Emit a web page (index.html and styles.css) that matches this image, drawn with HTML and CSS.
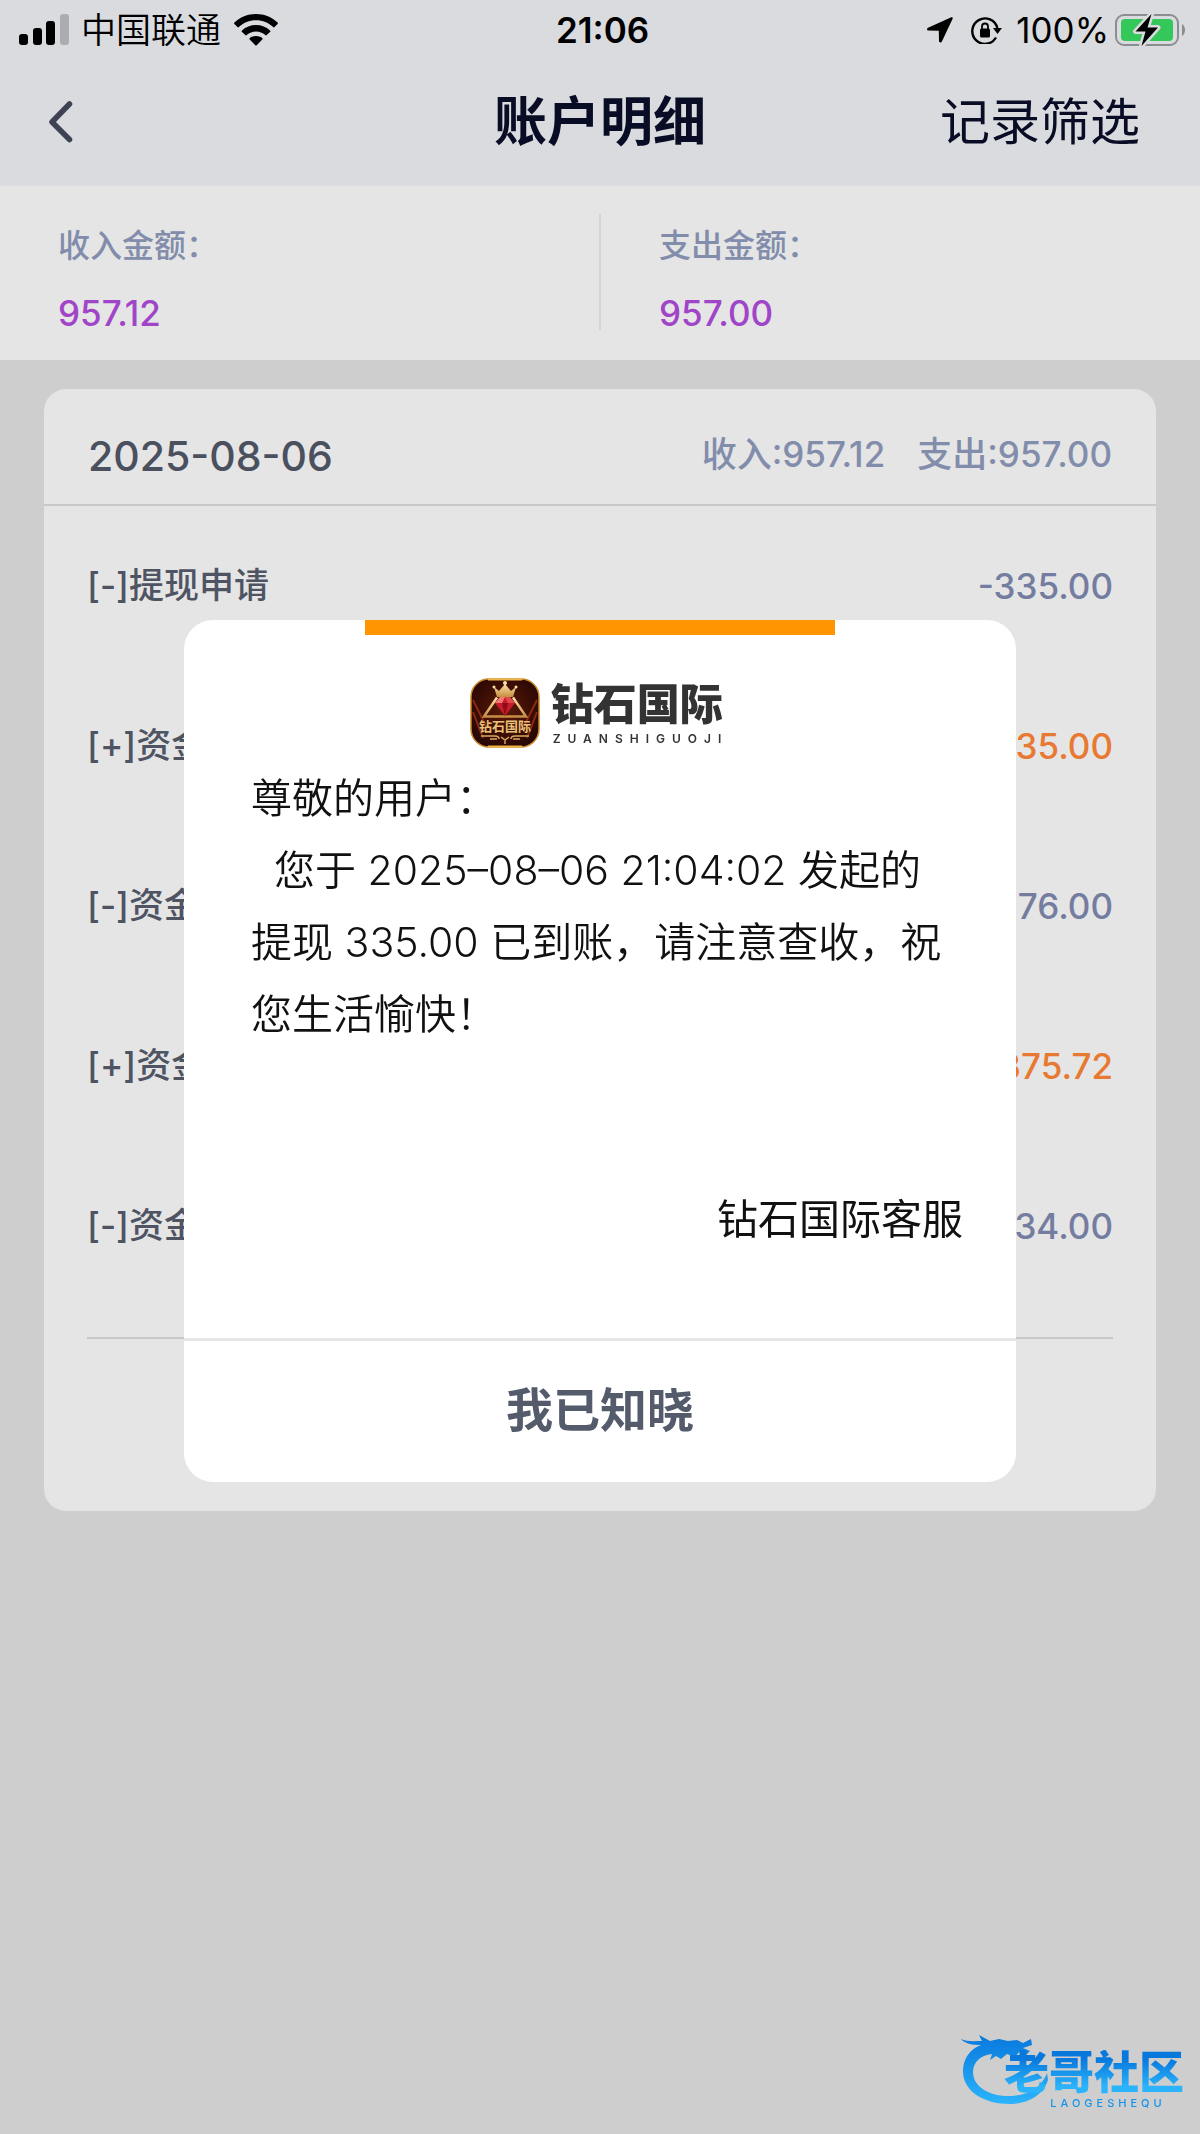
FILE: index.html
```html
<!DOCTYPE html>
<html lang="zh-CN">
<head>
    <meta charset="UTF-8">
    <meta name="viewport" content="width=device-width, initial-scale=1.0">
    <title>账户明细</title>
    <link rel="stylesheet" href="styles.css">
</head>
<body>

    <!-- Status bar -->
    <div class="status-bar">
        <div class="status-left">
            <svg class="icon-signal" width="50" height="32" viewBox="0 0 50 32">
                <rect x="0" y="20" width="9" height="11" rx="3"/>
                <rect x="14" y="14" width="9" height="17" rx="3"/>
                <rect x="27" y="7" width="9" height="24" rx="3"/>
                <rect x="41" y="0" width="9" height="31" rx="3" fill="#acadb1"/>
            </svg>
            <span class="carrier">中国联通</span>
            <svg class="icon-wifi" width="44" height="32" viewBox="0 0 44 32">
                <path d="M22 0C13.500 0 5.900 3.200.4 8.600a1 1 0 0 0 0 1.400l3.100 3.100a1 1 0 0 0 1.400 0C9.300 8.900 15.300 6.300 22 6.300s12.700 2.600 17.100 6.800a1 1 0 0 0 1.400 0l3.100-3.100a1 1 0 0 0 0-1.400C38.100 3.200 30.500 0 22 0z"/>
                <path d="M22 11c-5.400 0-10.300 2-14 5.400a1 1 0 0 0 0 1.500l3.300 3.200a1 1 0 0 0 1.400 0 14 14 0 0 1 18.600 0 1 1 0 0 0 1.400 0l3.300-3.200a1 1 0 0 0 0-1.500C32.300 13 27.400 11 22 11z"/>
                <path d="M22 22c-2.400 0-4.500.7-6.200 1.900a1 1 0 0 0-.1 1.500l5.600 5.900a1 1 0 0 0 1.400 0l5.600-5.900a1 1 0 0 0-.1-1.500C26.500 22.700 24.400 22 22 22z"/>
            </svg>
        </div>
        <div class="status-time">21:06</div>
        <div class="status-right">
            <svg class="icon-location" width="26" height="26" viewBox="0 0 26 26">
                <path d="M24.300.3 1 10.800c-1.500.8-1.200 2.700.6 2.800l10.200.1.200 10.400c.1 1.700 2.200 2 2.900.5L25.600 1.800c.5-1-.3-2-1.300-1.500z"/>
            </svg>
            <svg class="icon-lock" width="31" height="28" viewBox="0 0 31 28">
                <path d="M25 21.500A12.700 12.700 0 1 1 26.300 12" fill="none" stroke="#000" stroke-width="2.400"/>
                <path d="M22 12h9l-4.500 6z"/>
                <rect x="9" y="12.500" width="10" height="9" rx="1.500"/>
                <path d="M11 13v-2.500a3 3 0 0 1 6 0V13" fill="none" stroke="#000" stroke-width="1.800"/>
            </svg>
            <span class="battery-text">100%</span>
            <svg class="icon-battery" width="71" height="36" viewBox="0 0 71 36">
                <rect x="1" y="3" width="62" height="30" rx="8" fill="none" stroke="#8c8d90" stroke-width="2"/>
                <rect x="6" y="7" width="52" height="22" rx="4" fill="#34c759"/>
                <path d="M67 12c4 2 4 10 0 12z" fill="#8c8d90"/>
                <path d="M36.500 2 20.500 19.500h10L26.500 34 43 15.500H32.500z" fill="#000" stroke="#dadbdf" stroke-width="5" stroke-linejoin="round" paint-order="stroke"/>
            </svg>
        </div>
    </div>

    <!-- Page header -->
    <header class="page-header">
        <button class="back-btn" aria-label="返回">
            <svg width="24" height="42" viewBox="0 0 24 42">
                <path d="M20.500 3 3 21l17.500 17.500" fill="none" stroke="#3e4353" stroke-width="5.500" stroke-linecap="round" stroke-linejoin="round"/>
            </svg>
        </button>
        <h1>账户明细</h1>
        <button class="filter-btn">记录筛选</button>
    </header>

    <!-- Income / expense totals -->
    <section class="summary">
        <div class="summary-item">
            <div class="summary-label">收入金额：</div>
            <div class="summary-value">957.12</div>
        </div>
        <div class="summary-item">
            <div class="summary-label">支出金额：</div>
            <div class="summary-value">957.00</div>
        </div>
    </section>

    <!-- Records of one day -->
    <main class="card">
        <div class="card-header">
            <h2>2025-08-06</h2>
            <div class="day-total">
                <span>收入:957.12</span>
                <span>支出:957.00</span>
            </div>
        </div>
        <ul class="records">
            <li><span class="record-name">[-]提现申请</span><span class="amount">-335.00</span></li>
            <li><span class="record-name">[+]资金</span><span class="amount income">+335.00</span></li>
            <li><span class="record-name">[-]资金</span><span class="amount">-376.00</span></li>
            <li><span class="record-name">[+]资金</span><span class="amount income">+375.72</span></li>
            <li><span class="record-name">[-]资金</span><span class="amount">-334.00</span></li>
        </ul>
    </main>

    <!-- Notice dialog -->
    <div class="overlay">
        <div class="dialog" role="dialog" aria-modal="true">
            <div class="dialog-bar"></div>
            <div class="dialog-content">
                <div class="brand">
                    <svg class="brand-icon" width="70" height="70" viewBox="0 0 70 70">
                        <defs>
                            <radialGradient id="brandBg" cx="50%" cy="45%" r="65%">
                                <stop offset="0" stop-color="#5c1a08"/>
                                <stop offset="1" stop-color="#230502"/>
                            </radialGradient>
                            <linearGradient id="gold" x1="0" y1="0" x2="0" y2="1">
                                <stop offset="0" stop-color="#fbe3a6"/>
                                <stop offset="1" stop-color="#c68d42"/>
                            </linearGradient>
                        </defs>
                        <rect x="1" y="1" width="68" height="68" rx="18" fill="url(#brandBg)" stroke="#c98a2a" stroke-width="1.500"/>
                        <path d="M3 22 16 48M3 34l10 26M67 22 54 48M67 34 57 60" stroke="#8a2a12" stroke-width="2"/>
                        <path d="M18 1.500h34M18 68.500h34" stroke="#eeb54a" stroke-width="2"/>
                        <path d="M27 19.500 14 38.500h42L43 19.500" fill="none" stroke="url(#gold)" stroke-width="2.500"/>
                        <path d="M24 9l5 4 6-7 6 7 5-4-3 10H27z" fill="url(#gold)"/>
                        <circle cx="35" cy="5" r="2" fill="#fbe3a6"/>
                        <circle cx="24" cy="9" r="1.500" fill="#fbe3a6"/>
                        <circle cx="46" cy="9" r="1.500" fill="#fbe3a6"/>
                        <path d="M30 19h10l5 6-10 13-10-13z" fill="#c81c2a"/>
                        <path d="M30 19h5l-3 6h-7z" fill="#f27a72"/>
                        <path d="M35 19h5l5 6h-7z" fill="#e2474c"/>
                        <path d="M32 25h6l-3 13z" fill="#8e0d19"/>
                        <text x="35" y="53" class="brand-icon-text" text-anchor="middle">钻石国际</text>
                        <path d="M11 58h14q4 0 4 3M59 58H45q-4 0-4 3M20 61h7M43 61h7M31 59l4 3 4-3M35 61v5" fill="none" stroke="#d9a860" stroke-width="1.500"/>
                    </svg>
                    <div class="brand-name">
                        <strong>钻石国际</strong>
                        <small>ZUANSHIGUOJI</small>
                    </div>
                </div>
                <div class="message">
                    <p>尊敬的用户：</p>
                    <p>&nbsp;&nbsp;您于 2025–08–06 21:04:02 发起的提现 335.00 已到账，请注意查收，祝您生活愉快！</p>
                </div>
                <div class="signature">钻石国际客服</div>
            </div>
            <button class="confirm-btn">我已知晓</button>
        </div>
    </div>

    <!-- Community watermark -->
    <div class="watermark">
        <svg class="watermark-dragon" width="92" height="76" viewBox="0 0 92 76">
            <defs>
                <linearGradient id="blue" x1="0" y1="0" x2="0" y2="1">
                    <stop offset="0" stop-color="#0878dd"/>
                    <stop offset="1" stop-color="#2bb4fb"/>
                </linearGradient>
            </defs>
            <path d="M0 5c6 3 13 2 21 2l-3-6 11 6 9-2 9 2 9-1 6 3 8-4 1 6-9 3 7 3-4 4-7-3-4 5-8-3-6 5-5-3-6 4 2-6C19 21 12 29 12 38c0 14 15 24 35 24 18 0 33-7 39-23l1 7C82 61 67 70 49 70 22 70 2 57 2 37 2 25 9 15 20 11 12 11 4 10 0 5z" fill="url(#blue)"/>
        </svg>
        <div class="watermark-text">
            <strong>老哥社区</strong>
            <small>LAOGESHEQU</small>
        </div>
    </div>

</body>
</html>
```

FILE: styles.css
```css
/* Base */
* {
    box-sizing: border-box;
}

body {
    margin: 0;
    min-height: 100vh;
    background-color: #cecece;
    color: #4f5463;
    font-family: Inter, 'Noto Sans CJK SC', sans-serif;
    font-size: 35px;
}

h1, h2, p, ul {
    margin: 0;
    padding: 0;
}

button {
    border: none;
    background: none;
    padding: 0;
    font-family: inherit;
    cursor: pointer;
}

svg {
    display: block;
    flex: none;
}

/* Status bar */
.status-bar {
    display: grid;
    grid-template-columns: 1fr auto 1fr;
    align-items: center;
    height: 60px;
    padding: 0 14px 0 19px;
    background-color: #dadbdf;
    color: #000;
}

.status-left, .status-right {
    display: flex;
    align-items: center;
}

.status-right {
    justify-content: flex-end;
}

.carrier {
    margin: 0 13px 0 12px;
    font-weight: 350;
    line-height: 60px;
}

.status-time {
    font-size: 35px;
    font-weight: 600;
}

.icon-lock {
    margin: 0 14px 0 18px;
}

.battery-text {
    margin-right: 6px;
}

/* Page header */
.page-header {
    display: grid;
    grid-template-columns: 1fr auto 1fr;
    align-items: center;
    height: 126px;
    padding: 0 49px 2px;
    background-color: #dadbdf;
    color: #080c24;
}

.page-header h1 {
    font-size: 53px;
    font-weight: 700;
    line-height: 76px;
}

.back-btn {
    justify-self: start;
}

.filter-btn {
    justify-self: end;
    padding-right: 11px;
    color: #080c24;
    font-size: 50px;
    line-height: 76px;
}

/* Totals */
.summary {
    display: flex;
    padding: 28px 0 30px;
    background-color: #e5e5e5;
}

.summary-item {
    flex: 1;
    height: 116px;
    padding-left: 58px;
}

.summary-item + .summary-item {
    border-left: 2px solid #d5d5d5;
}

.summary-label {
    color: #828cab;
    font-size: 32px;
    font-weight: 500;
    line-height: 64px;
}

.summary-value {
    color: #a044c8;
    font-weight: 500;
    line-height: 70px;
}

/* Day card */
.card {
    margin: 29px 44px;
    padding-bottom: 172px;
    border-radius: 22px;
    background-color: #e5e5e5;
}

.card-header {
    display: flex;
    justify-content: space-between;
    align-items: center;
    height: 117px;
    padding: 9px 44px 0;
    border-bottom: 2px solid #c8c8c8;
}

.card-header h2 {
    padding-top: 9px;
    color: #4a505e;
    font-size: 41px;
    font-weight: 500;
}

.day-total {
    display: flex;
    gap: 32px;
    color: #828cab;
    font-weight: 500;
}

.records {
    margin: 0 43px;
    border-bottom: 2px solid #c8c8c8;
    padding-bottom: 31px;
    list-style: none;
}

.records li {
    display: flex;
    justify-content: space-between;
    align-items: center;
    height: 160px;
    font-weight: 500;
}

.record-name {
    padding-bottom: 7px;
}

.amount {
    color: #747da0;
}

.amount.income {
    color: #e87932;
}

/* Dialog */
.overlay {
    position: fixed;
    inset: 0;
    display: flex;
    align-items: center;
    justify-content: center;
    padding: 0 184px 32px;
}

.dialog {
    flex: 1;
    overflow: hidden;
    border-radius: 29px;
    background-color: #fff;
    color: #111;
}

.dialog-bar {
    width: 470px;
    height: 15px;
    margin: 0 auto;
    background-color: #ff9500;
}

.dialog-content {
    padding: 43px 53px 82px 67px;
}

.brand {
    display: flex;
    justify-content: center;
    gap: 11px;
    height: 84px;
    padding-right: 16px;
}

.brand-icon-text {
    fill: #e9c078;
    font-size: 13px;
    font-weight: 700;
}

.brand-name {
    display: flex;
    flex-direction: column;
    color: #333;
}

.brand-name strong {
    font-size: 43px;
    font-weight: 900;
    line-height: 52px;
}

.brand-name small {
    padding-left: 2px;
    font-size: 12px;
    font-weight: 600;
    letter-spacing: 7px;
    line-height: 18px;
}

.message {
    padding-right: 12px;
    font-size: 41px;
    font-weight: 350;
    line-height: 72px;
}

.signature {
    margin-top: 132px;
    text-align: right;
    font-size: 41px;
    line-height: 74px;
}

.confirm-btn {
    width: 100%;
    height: 144px;
    padding-bottom: 10px;
    border-top: 3px solid #e6e6e6;
    color: #545b6b;
    font-size: 47px;
    font-weight: 700;
}

/* Watermark */
.watermark {
    position: fixed;
    right: 16px;
    bottom: 24px;
    display: flex;
    align-items: flex-end;
}

.watermark-dragon {
    margin-right: -49px;
}

.watermark-text {
    display: flex;
    flex-direction: column;
    color: #1593ec;
}

.watermark-text strong {
    background: linear-gradient(#0878dd 20%, #2bb4fb 80%);
    background-clip: text;
    -webkit-background-clip: text;
    color: transparent;
    font-size: 45px;
    font-weight: 900;
    line-height: 46px;
}

.watermark-text small {
    align-self: center;
    padding-left: 28px;
    font-size: 11px;
    font-weight: 500;
    letter-spacing: 4px;
    line-height: 14px;
}
```
